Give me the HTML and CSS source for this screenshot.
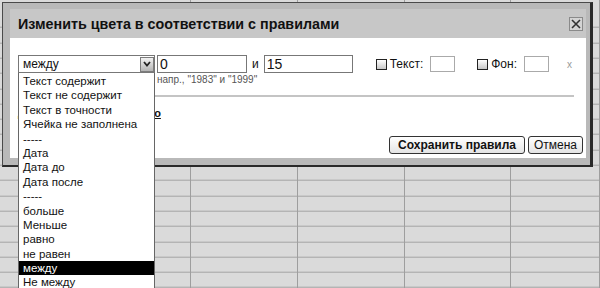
FILE: index.html
```html
<!DOCTYPE html>
<html lang="ru">

<head>
    <meta charset="UTF-8">
    <title>Изменить цвета в соответствии с правилами</title>
    <link rel="stylesheet" href="styles.css">
</head>

<body>

    <div class="sheet">
        <div class="col"></div>
        <div class="col"></div>
        <div class="col"></div>
        <div class="col"></div>
        <div class="col"></div>
    </div>

    <div class="dialog">
        <div class="dialog-title">
            <span class="title-text">Изменить цвета в соответствии с правилами</span>
            <span class="close">
                <svg width="10" height="10" viewBox="0 0 10 10">
                    <path d="M1 1 L9 9 M9 1 L1 9" stroke="#333" stroke-width="1.6" />
                </svg>
            </span>
        </div>

        <div class="dialog-body">
            <div class="rule">
                <div class="select">
                    <span>между</span>
                    <span class="arrow">
                        <svg width="8" height="6" viewBox="0 0 8 6">
                            <path d="M1 1 L4 4.5 L7 1" fill="none" stroke="#222" stroke-width="1.8" />
                        </svg>
                    </span>
                </div>
                <div class="field">
                    <div class="pair">
                        <span class="input">0</span>
                        <span class="and">и</span>
                        <span class="input input2">15</span>
                    </div>
                    <div class="hint">напр., "1983" и "1999"</div>
                </div>
                <span class="check check-text"><span class="box"></span>Текст:</span>
                <span class="swatch"></span>
                <span class="check check-bg"><span class="box"></span>Фон:</span>
                <span class="swatch"></span>
                <span class="remove">x</span>
            </div>

            <div class="rule-line"></div>

            <a class="add" href="#">Добавить другое правило</a>

            <div class="actions">
                <button class="btn btn-save">Сохранить правила</button>
                <button class="btn">Отмена</button>
            </div>
        </div>
    </div>

    <ul class="options">
        <li>Текст содержит</li>
        <li>Текст не содержит</li>
        <li>Текст в точности</li>
        <li>Ячейка не заполнена</li>
        <li>-----</li>
        <li>Дата</li>
        <li>Дата до</li>
        <li>Дата после</li>
        <li>-----</li>
        <li>больше</li>
        <li>Меньше</li>
        <li>равно</li>
        <li>не равен</li>
        <li class="selected">между</li>
        <li>Не между</li>
    </ul>

</body>

</html>
```

FILE: styles.css
```css
body {
    margin: 0;
    width: 600px;
    height: 288px;
    overflow: hidden;
    position: relative;
    font-family: "Liberation Sans", Arial, sans-serif;
    color: #111;
}

/* spreadsheet behind the dialog */

.sheet {
    height: 288px;
    display: grid;
    grid-template-columns: 191px 107px 107px 106px 1fr;
    background-color: #dadada;
    background-image: repeating-linear-gradient(to bottom, transparent 0 14.3px, #a2a2a2 14.3px 15.3px);
    background-position: 0 12.7px;
}

.col {
    border-right: 1px solid #9e9e9e;
}

/* dialog */

.dialog {
    position: absolute;
    left: 2px;
    top: 2px;
    width: 591px;
    height: 165px;
    box-sizing: border-box;
    border: 1px solid #4a4a4a;
    border-right-width: 3px;
    border-bottom-width: 2px;
    border-right-color: #2a2a2a;
    border-bottom-color: #2a2a2a;
    padding: 6px 4px 7px 7px;
    background-color: #b9b9b9;
    display: flex;
    flex-direction: column;
}

.dialog-title {
    height: 29px;
    background-color: #c7c7c7;
    display: flex;
    align-items: center;
    justify-content: space-between;
    padding: 0 3px 0 8px;
}

.title-text {
    font-size: 14.3px;
    font-weight: bold;
    color: #111;
}

.close {
    width: 12px;
    height: 12px;
    border: 1px solid #8a8a8a;
    background-color: #d4d4d4;
    display: flex;
    align-items: center;
    justify-content: center;
    margin-top: 1px;
}

.dialog-body {
    flex: 1;
    background-color: #fff;
    padding: 17px 3px 0 8px;
}

.rule {
    display: flex;
    align-items: flex-start;
    font-size: 12px;
}

.select {
    width: 137px;
    height: 18px;
    box-sizing: border-box;
    border: 1px solid #777;
    display: flex;
    align-items: center;
    justify-content: space-between;
    padding-left: 4px;
    font-size: 12px;
}

.arrow {
    width: 14px;
    height: 15px;
    box-sizing: border-box;
    border: 1px solid #7c7c7c;
    background: linear-gradient(#f2f2f2, #b4b4b4);
    display: flex;
    align-items: center;
    justify-content: center;
}

.field {
    margin-left: 2px;
}

.pair {
    display: flex;
    align-items: center;
}

.input {
    width: 90px;
    height: 18px;
    box-sizing: border-box;
    border: 1px solid #777;
    padding-left: 2px;
    font-size: 14px;
    line-height: 16px;
}

.input2 {
    width: 89px;
}

.and {
    margin: 0 5px;
    font-size: 12px;
}

.hint {
    font-size: 10px;
    color: #555;
    line-height: 12px;
    margin-top: 1px;
}

.check {
    display: flex;
    align-items: center;
    height: 18px;
    font-size: 12px;
}

.check-text {
    margin-left: 23px;
}

.check-bg {
    margin-left: 22px;
}

.box {
    width: 11px;
    height: 11px;
    box-sizing: border-box;
    border: 1px solid #222;
    background: linear-gradient(#fff, #c8c8c8);
    margin-right: 3px;
}

.swatch {
    width: 25px;
    height: 16px;
    box-sizing: border-box;
    border: 1px solid #aaa;
    margin: 1px 0 0 7px;
}

.remove {
    color: #999;
    font-size: 10px;
    margin: 4px 0 0 18px;
}

.rule-line {
    height: 2px;
    background-color: #c4c4c4;
    margin: 9px 9px 0 0;
}

.add {
    display: inline-block;
    margin-top: 9px;
    font-size: 11px;
    font-weight: bold;
    color: #111;
    line-height: 14px;
}

.actions {
    display: flex;
    justify-content: flex-end;
    gap: 3px;
    margin-top: 15px;
}

.btn {
    height: 18px;
    padding: 0 5px;
    border: 1px solid #333;
    border-radius: 3px;
    background: linear-gradient(#fff, #e4e4e4);
    font-family: "Liberation Sans", Arial, sans-serif;
    font-size: 12px;
    color: #111;
}

.btn-save {
    font-weight: bold;
    padding: 0 8px;
}

/* dropdown list */

.options {
    position: absolute;
    left: 18px;
    top: 73px;
    width: 137px;
    box-sizing: border-box;
    margin: 0;
    padding: 1px 0 0;
    list-style: none;
    background-color: #fff;
    border: 1px solid #666;
    border-top: none;
    font-size: 11.5px;
}

.options li {
    height: 14.4px;
    line-height: 14.4px;
    padding-left: 4px;
    white-space: nowrap;
}

.options .selected {
    background-color: #000;
    color: #fff;
}
```
